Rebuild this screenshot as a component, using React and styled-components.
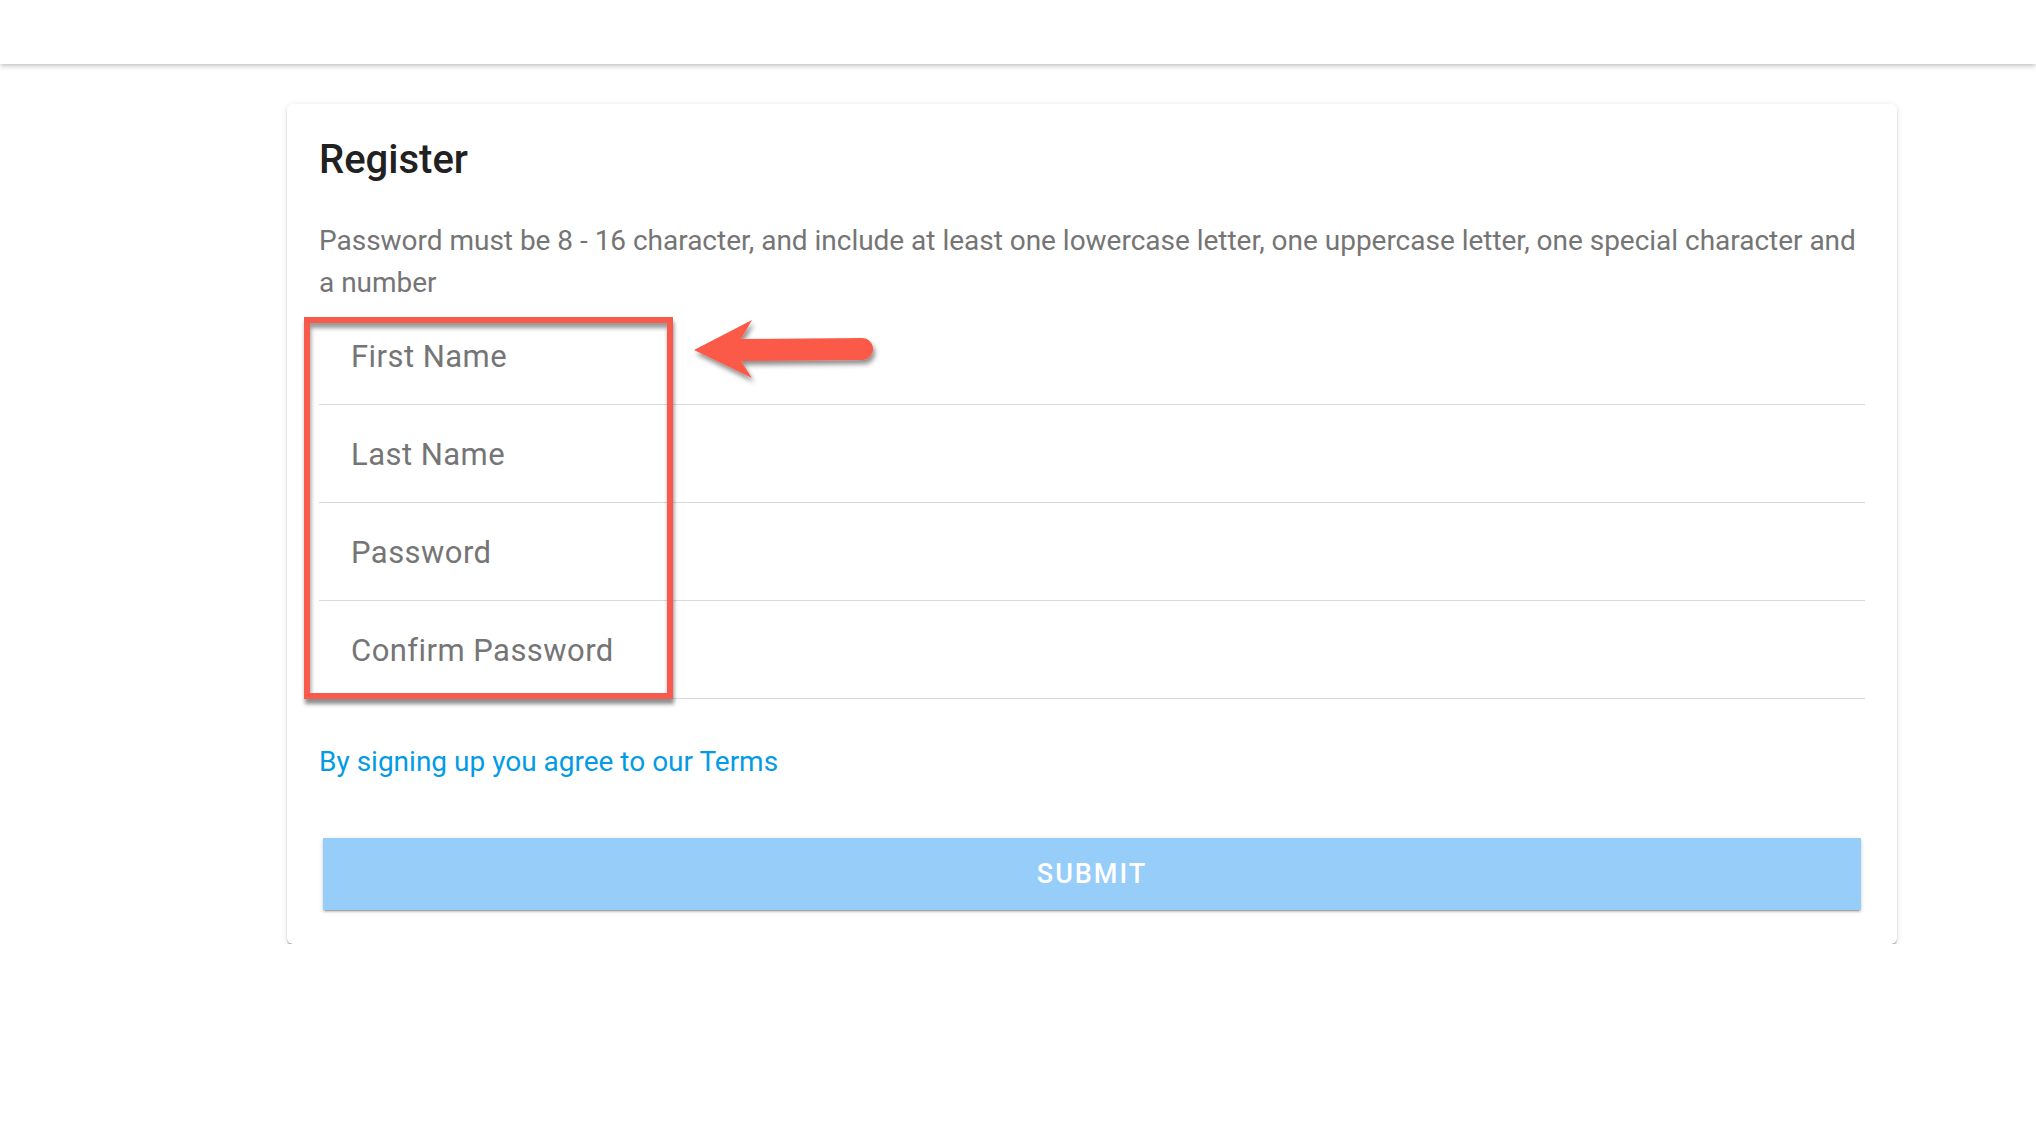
import React from "react";
import styled, { createGlobalStyle } from "styled-components";

const Global = createGlobalStyle`
  html, body { margin: 0; padding: 0; background: #ffffff; }
  body { font-family: Roboto, "Liberation Sans", Arial, sans-serif; }
  * { box-sizing: border-box; }
`;

const TopBar = styled.header`
  height: 64px;
  background: #ffffff;
  box-shadow: 0 2px 4px -1px rgba(0,0,0,0.2), 0 4px 5px 0 rgba(0,0,0,0.08);
  position: relative;
  z-index: 2;
`;

const Main = styled.main`
  padding: 40px 0 0 287px;
`;

const Card = styled.section`
  width: 1610px;
  background: #fff;
  border-radius: 6px;
  box-shadow: 0 3px 2px -1px rgba(0,0,0,0.32), 0 1px 2px 0 rgba(0,0,0,0.12), 0 1px 7px 0 rgba(0,0,0,0.1);
  padding: 32px 32px 34px 32px;
  display: flex;
  flex-direction: column;
`;

const Title = styled.h2`
  margin: 0;
  font-family: Roboto, "Liberation Sans", sans-serif;
  font-weight: 500;
  font-size: 40px;
  line-height: 48px;
  color: #212121;
`;

const Hint = styled.p`
  margin: 36px 0 3px 0;
  font-size: 28px;
  line-height: 42px;
  letter-spacing: -0.02px;
  color: #757575;
`;

const Fields = styled.div`
  position: relative;
  display: flex;
  flex-direction: column;
`;

const Field = styled.div`
  height: 98px;
  border-bottom: 1px solid #d9d9d9;
  display: flex;
  align-items: flex-end;
  padding: 0 0 29px 32px;
`;

const FieldLabel = styled.label`
  font-size: 31px;
  line-height: 36px;
  letter-spacing: 0.45px;
  color: #757575;
`;

const Frame = styled.div`
  position: absolute;
  left: -15px;
  top: 10px;
  width: 369px;
  height: 382px;
  border: 6px solid #f85a4b;
  box-shadow: 1px 5px 4px rgba(0,0,0,0.45), inset 1px 5px 4px rgba(0,0,0,0.4);
  pointer-events: none;
`;

const ArrowSvg = styled.svg`
  position: absolute;
  left: 361px;
  top: -7px;
  width: 200px;
  height: 100px;
  overflow: visible;
  pointer-events: none;
`;

const Terms = styled.a`
  margin-top: 42px;
  font-size: 28px;
  line-height: 42px;
  letter-spacing: 0;
  color: #039be5;
  text-decoration: none;
  align-self: flex-start;
`;

const SubmitButton = styled.button`
  margin: 55px 4px 0 4px;
  height: 72px;
  border: none;
  border-radius: 0;
  background: #97cdf9;
  color: #ffffff;
  font-family: Roboto, "Liberation Sans", sans-serif;
  font-weight: 500;
  font-size: 27px;
  letter-spacing: 2px;
  text-transform: uppercase;
  box-shadow: 0 3px 1px -2px rgba(0,0,0,0.2), 0 2px 2px 0 rgba(0,0,0,0.14), 0 1px 5px 0 rgba(0,0,0,0.12);
  cursor: pointer;
`;

const fields = ["First Name", "Last Name", "Password", "Confirm Password"];

export default function App() {
  return (
    <>
      <Global />
      <TopBar />
      <Main>
        <Card>
          <Title>Register</Title>
          <Hint>
            Password must be 8 - 16 character, and include at least one lowercase letter, one uppercase letter, one special character and a number
          </Hint>
          <Fields>
            {fields.map((f) => (
              <Field key={f}>
                <FieldLabel>{f}</FieldLabel>
              </Field>
            ))}
            <Frame />
            <ArrowSvg viewBox="0 0 200 100">
              <defs>
                <filter id="arrowShadow" x="-20%" y="-40%" width="140%" height="180%">
                  <feDropShadow dx="2" dy="4" stdDeviation="2.5" floodColor="#000" floodOpacity="0.45" />
                </filter>
              </defs>
              <path
                d="M14 50 L72 20 L61 39 L182 38 A11 11 0 0 1 182 60 L61 61 L72 78 Z"
                fill="#fb5a4a"
                filter="url(#arrowShadow)"
              />
            </ArrowSvg>
          </Fields>
          <Terms href="#">By signing up you agree to our Terms</Terms>
          <SubmitButton type="button">Submit</SubmitButton>
        </Card>
      </Main>
    </>
  );
}
